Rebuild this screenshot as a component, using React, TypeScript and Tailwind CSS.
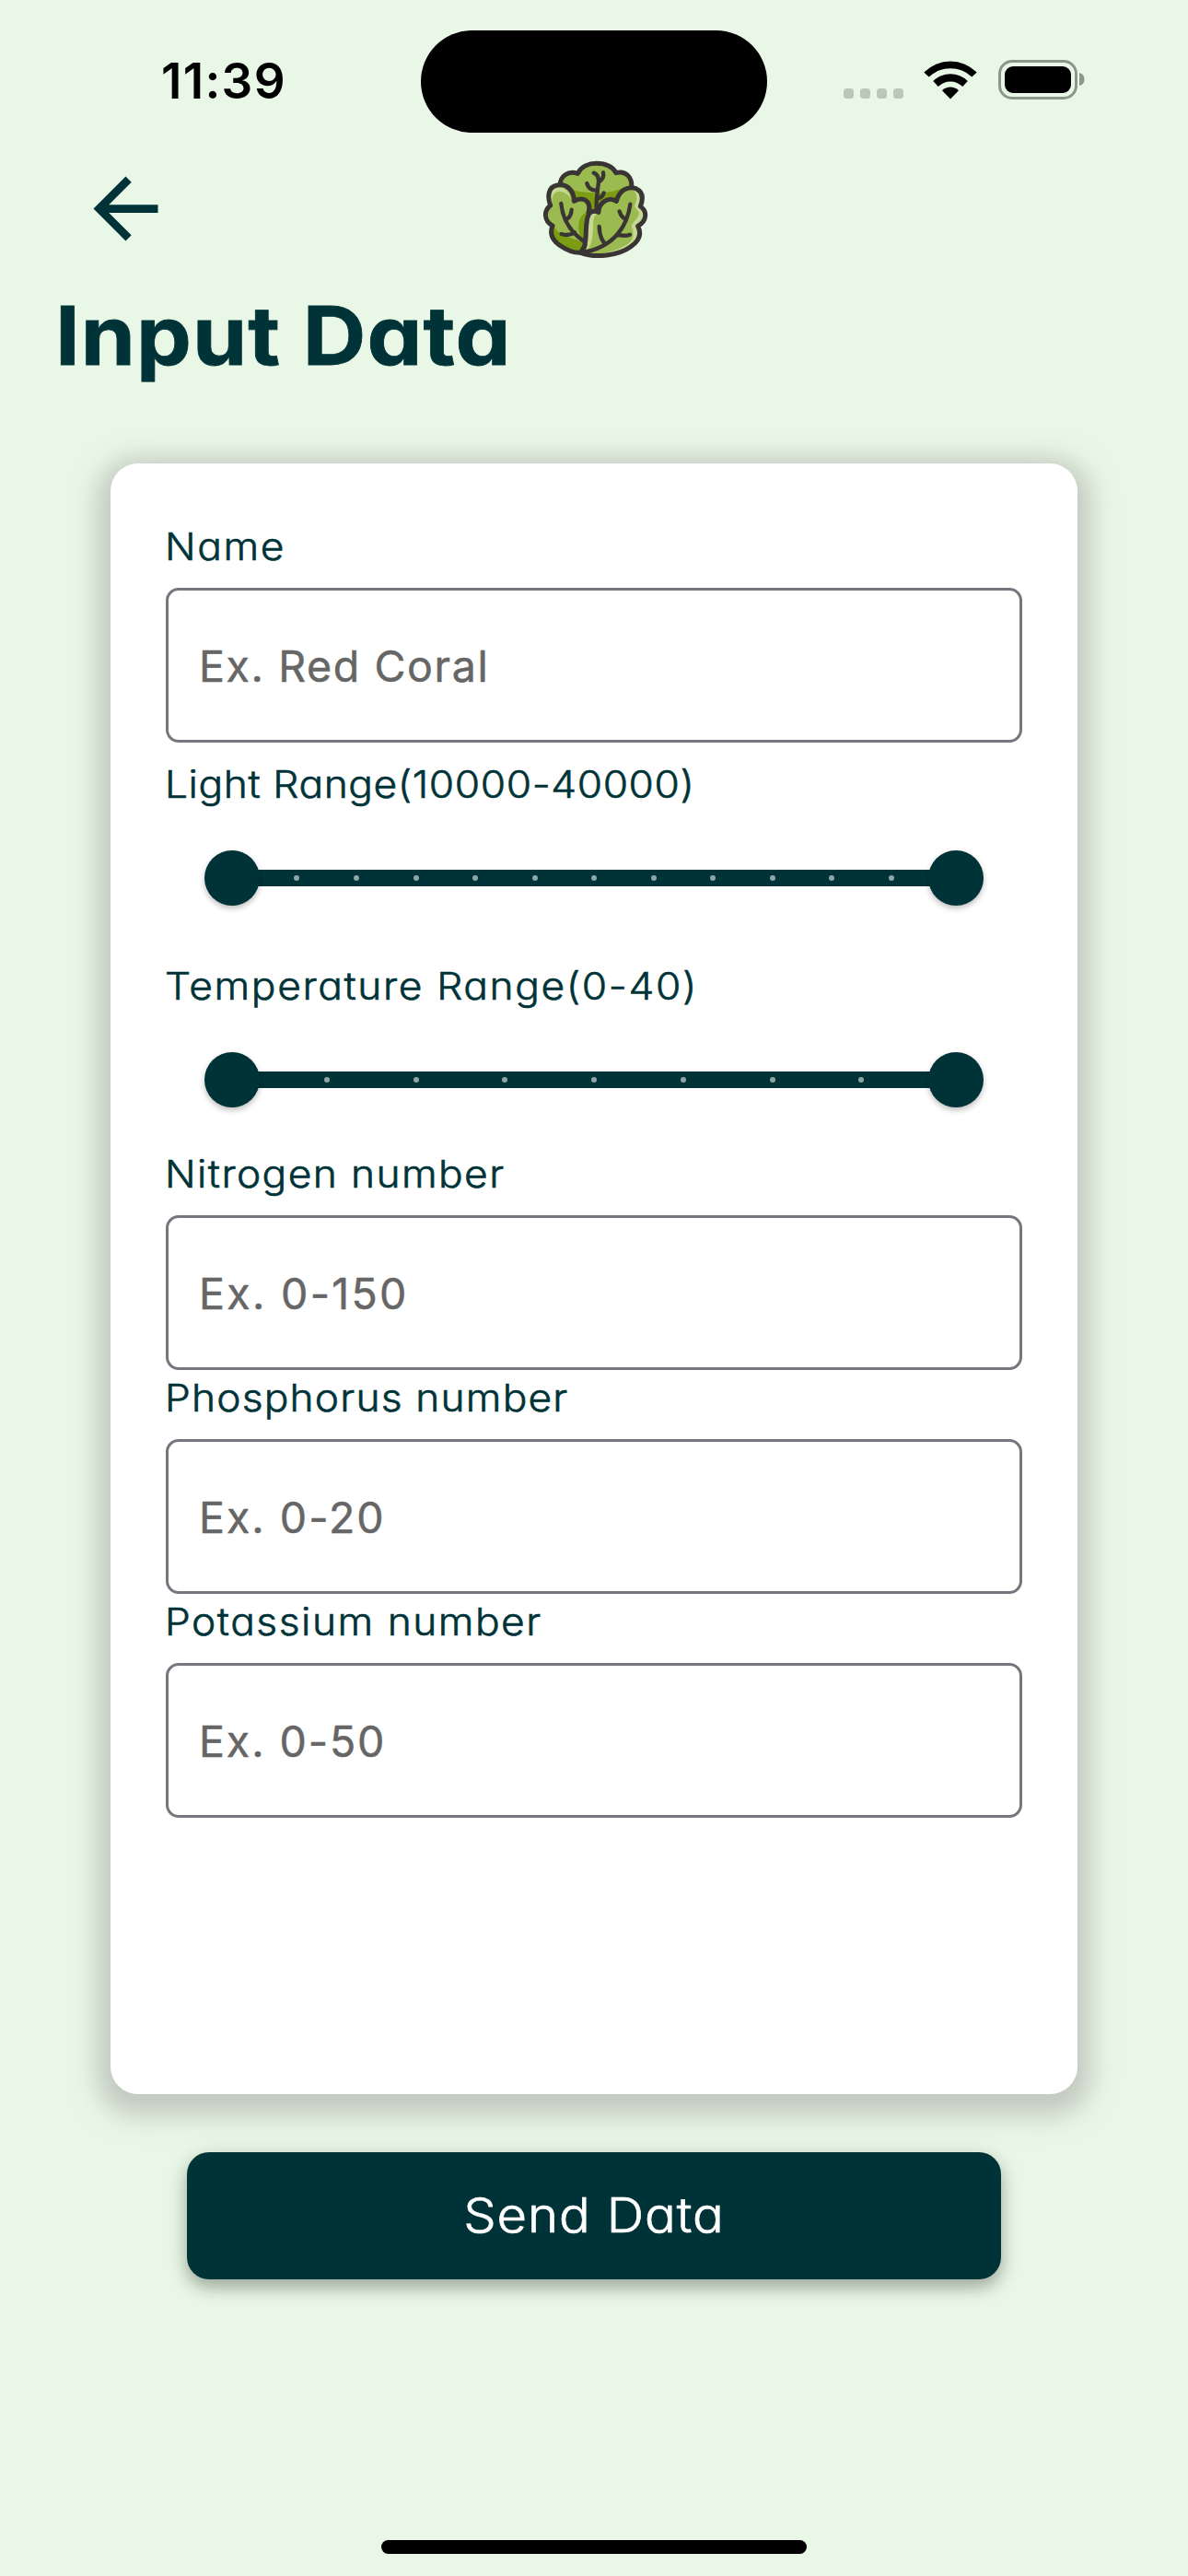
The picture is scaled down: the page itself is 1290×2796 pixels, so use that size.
function StatusIcons() {
  return (
    <div className="flex h-[43px] items-end">
      <div className="mb-[1px] flex gap-[7px]">
        {[0, 1, 2, 3].map((i) => (
          <span key={i} className="size-[11px] rounded-[3.5px] bg-[#bbc7b9]" />
        ))}
      </div>
      <svg className="ml-[22px] h-[43px] w-[58px]" viewBox="0 0 58 43">
        <path d="M0.3 13.5A40.6 40.6 0 0 1 57.7 13.5L52.3 18.6A33.4 33.4 0 0 0 5.7 18.6Z" />
        <path d="M10.2 23.1A26.7 26.7 0 0 1 47.8 23.1L42.2 28.9A18.8 18.8 0 0 0 15.8 28.9Z" />
        <path d="M20 33.2A12.7 12.7 0 0 1 38 33.2L29 42.4Z" />
      </svg>
      <div className="ml-[23px] flex h-[43px] w-[86px] items-stretch rounded-[15px] border-[3px] border-[#8c968b] p-[4px]">
        <div className="w-full rounded-[9px] bg-black" />
      </div>
      <svg className="mb-[15px] ml-[2px] h-[14px] w-[6px]" viewBox="0 0 6 14">
        <path d="M0 0A7.2 7.2 0 0 1 0 14Z" fill="#8c968b" />
      </svg>
    </div>
  );
}

function CabbageLogo() {
  return (
    <svg className="h-[130px] w-[150px]" viewBox="0 0 450 390" fill="none" strokeLinecap="round" strokeLinejoin="round">
      {/* back leaf */}
      <path d="M115 122C114 95 140 74 172 85C183 62 208 52 233 52C262 52 285 62 297 83C328 74 350 98 347 128L298 180L240 212L207 208L160 170Z" fill="#9bbb51" />
      <path d="M140 132C180 152 280 156 320 130L300 170L240 212L207 208L165 170Z" fill="#7c9c12" />
      {/* left leaf */}
      <path d="M207 212C218 175 190 158 160 175C160 140 135 116 105 123C76 128 72 160 83 189C60 207 62 240 90 255C80 280 90 302 112 318C135 334 160 344 182 342C202 315 196 260 207 212Z" fill="#9bbb51" />
      <path d="M93 256C110 285 135 290 190 308C170 280 164 222 207 208C200 255 205 315 182 342C150 344 75 308 93 256Z" fill="#7c9c12" />
      <path d="M88 185C76 155 82 132 107 131C127 128 145 143 150 168C142 153 127 142 110 143C90 145 88 165 88 185Z" fill="#c6d893" />
      {/* right leaf */}
      <path d="M240 211C240 180 272 158 298 175C307 140 335 124 362 134C388 146 384 172 376 192C400 208 397 240 368 256C382 284 370 306 345 323C305 352 230 362 182 343C210 315 190 250 208 218C216 206 228 206 240 211Z" fill="#9bbb51" />
      <path d="M240 216C216 218 226 255 220 290C217 312 212 325 200 335L186 340C210 310 194 250 210 220C218 209 230 210 240 216Z" fill="#c6d893" />
      <path d="M343 134C366 134 378 150 374 173L368 193C396 212 390 234 359 253C376 286 362 302 342 318C305 345 260 350 225 350C270 344 315 332 342 309C356 296 354 276 347 254C360 236 374 223 371 210L357 192C370 163 365 142 343 134Z" fill="#c6d893" />
      <g stroke="#393535" strokeWidth="15">
        <path d="M115 122C114 95 140 74 172 85C183 62 208 52 233 52C262 52 285 62 297 83C328 74 350 98 347 128" />
        <path d="M207 212C218 175 190 158 160 175C160 140 135 116 105 123C76 128 72 160 83 189C60 207 62 240 90 255C80 280 90 302 112 318C135 334 160 344 182 343" />
        <path d="M240 211C240 180 272 158 298 175C307 140 335 124 362 134C388 146 384 172 376 192C400 208 397 240 368 256C382 284 370 306 345 323C305 352 230 362 182 343C210 315 190 250 208 218C216 206 228 206 240 211Z" />
      </g>
      <g stroke="#393535" strokeWidth="13">
        <path d="M118 183C122 225 142 272 194 307M152 203C151 218 146 228 137 233M119 282C134 287 148 286 162 277" />
        <path d="M343 185C335 245 300 325 182 343M308 208C311 220 318 229 327 233M342 284C328 289 315 288 300 284M242 258C243 280 247 297 257 309" />
        <path d="M233 204C231 170 237 140 240 112C240 97 236 87 224 83M255 82C259 96 251 106 240 113M202 117C205 131 217 139 231 140M257 148C254 160 247 165 235 166" />
      </g>
      <path d="M172 343L196 305L203 318L197 335Z" fill="#393535" />
    </svg>
  );
}

function Label({ text, tracking }: { text: string; tracking: string }) {
  return (
    <span
      className={`-ml-px block h-[60px] w-[600px] origin-left scale-x-108 text-[41px] leading-[60px] font-light whitespace-nowrap text-[#003337] [-webkit-text-stroke:0.6px_#003337] [font-feature-settings:'cv11'] ${tracking}`}
    >
      {text}
    </span>
  );
}

function Field({ label, placeholder, tracking, hintTracking }: { label: string; placeholder: string; tracking: string; hintTracking: string }) {
  return (
    <label className="block">
      <Label text={label} tracking={tracking} />
      <input
        className={`mt-[15px] block h-[168px] w-full rounded-[14px] border-[3px] border-[#79747e] bg-white pt-[2px] pl-[33px] text-[46.5px] text-[#666666] outline-none [-webkit-text-stroke:0.5px_#666666] placeholder:text-[#666666] placeholder:opacity-100 ${hintTracking}`}
        placeholder={placeholder}
      />
    </label>
  );
}

function RangeSlider({ label, divisions, tracking }: { label: string; divisions: number; tracking: string }) {
  const ticks = Array.from({ length: divisions - 1 }, (_, i) => ((i + 1) / divisions) * 100);
  return (
    <div className="mt-[15px]">
      <Label text={label} tracking={tracking} />
      <div className="flex h-[144px] items-center px-[42px]">
        <div className="relative flex h-[60px] w-full items-center justify-between">
          <div className="absolute top-[21px] right-[30px] left-[30px] h-[18px] bg-[#003337]" />
          <div className="absolute inset-y-0 right-[36px] left-[36px]">
            {ticks.map((left) => (
              <span key={left} className="absolute top-[27px] size-[6px] -translate-x-1/2 rounded-full bg-[#8fa6a8]" style={{ left: `${left}%` }} />
            ))}
          </div>
          <span className="relative size-[60px] rounded-full bg-[#003337] shadow-[0_3px_6px_rgba(0,0,0,0.26)]" />
          <span className="relative size-[60px] rounded-full bg-[#003337] shadow-[0_3px_6px_rgba(0,0,0,0.26)]" />
        </div>
      </div>
    </div>
  );
}

export default function App() {
  return (
    <div className="flex h-[2796px] w-[1290px] flex-col items-center overflow-hidden bg-[#e9f8e6] font-['Inter',sans-serif]">
      <div className="grid h-[160px] w-full grid-cols-[457px_376px_457px]">
        <div className="pt-[58px] pl-[175px] text-[53px] leading-[60px] font-semibold tracking-[1.3px] text-black">11:39</div>
        <div className="mt-[33px] h-[111px] rounded-full bg-black" />
        <div className="pt-[65px] pl-[83px]">
          <StatusIcons />
        </div>
      </div>

      <div className="grid h-[130px] w-full grid-cols-[457px_376px_457px]">
        <button className="mt-[14px] ml-[84px] size-[105px]" aria-label="Back">
          <svg className="size-[105px]" viewBox="0 0 24 24" fill="#003337">
            <path d="M20 11H7.83l5.59-5.59L12 4l-8 8 8 8 1.41-1.41L7.83 13H20v-2z" />
          </svg>
        </button>
        <div className="flex justify-center">
          <CabbageLogo />
        </div>
      </div>

      <h1 className="mt-[24px] ml-[60px] w-[600px] origin-left scale-x-108 self-start text-[88px] leading-[100px] font-bold tracking-[1px] text-[#003337] [-webkit-text-stroke:0.8px_#003337] [font-feature-settings:'cv11']">
        Input Data
      </h1>

      <div className="mt-[89px] h-[1770px] w-[1050px] shrink-0 rounded-[30px] bg-white p-[60px] shadow-[0_9px_27px_15px_rgba(158,158,158,0.5)]">
        <Field label="Name" placeholder="Ex. Red Coral" tracking="tracking-[1.5px]" hintTracking="tracking-[1.6px]" />
        <RangeSlider label="Light Range(10000-40000)" divisions={12} tracking="tracking-[0.55px]" />
        <RangeSlider label="Temperature Range(0-40)" divisions={8} tracking="tracking-[1.5px]" />
        <Field label="Nitrogen number" placeholder="Ex. 0-150" tracking="tracking-[1.3px]" hintTracking="tracking-[2.3px]" />
        <Field label="Phosphorus number" placeholder="Ex. 0-20" tracking="tracking-[1.1px]" hintTracking="tracking-[2px]" />
        <Field label="Potassium number" placeholder="Ex. 0-50" tracking="tracking-[1.4px]" hintTracking="tracking-[1.9px]" />
      </div>

      <button className="mt-[63px] h-[138px] w-[884px] shrink-0 rounded-[24px] bg-[#003337] text-[52px] font-light tracking-[0.9px] text-white shadow-[0_9px_18px_rgba(0,0,0,0.28),0_3px_30px_rgba(0,0,0,0.08)] [-webkit-text-stroke:0.7px_#ffffff] [font-feature-settings:'cv11']">
        <span className="block scale-x-108">Send Data</span>
      </button>

      <div className="mt-auto mb-[24px] h-[15px] w-[462px] shrink-0 rounded-full bg-black" />
    </div>
  );
}
